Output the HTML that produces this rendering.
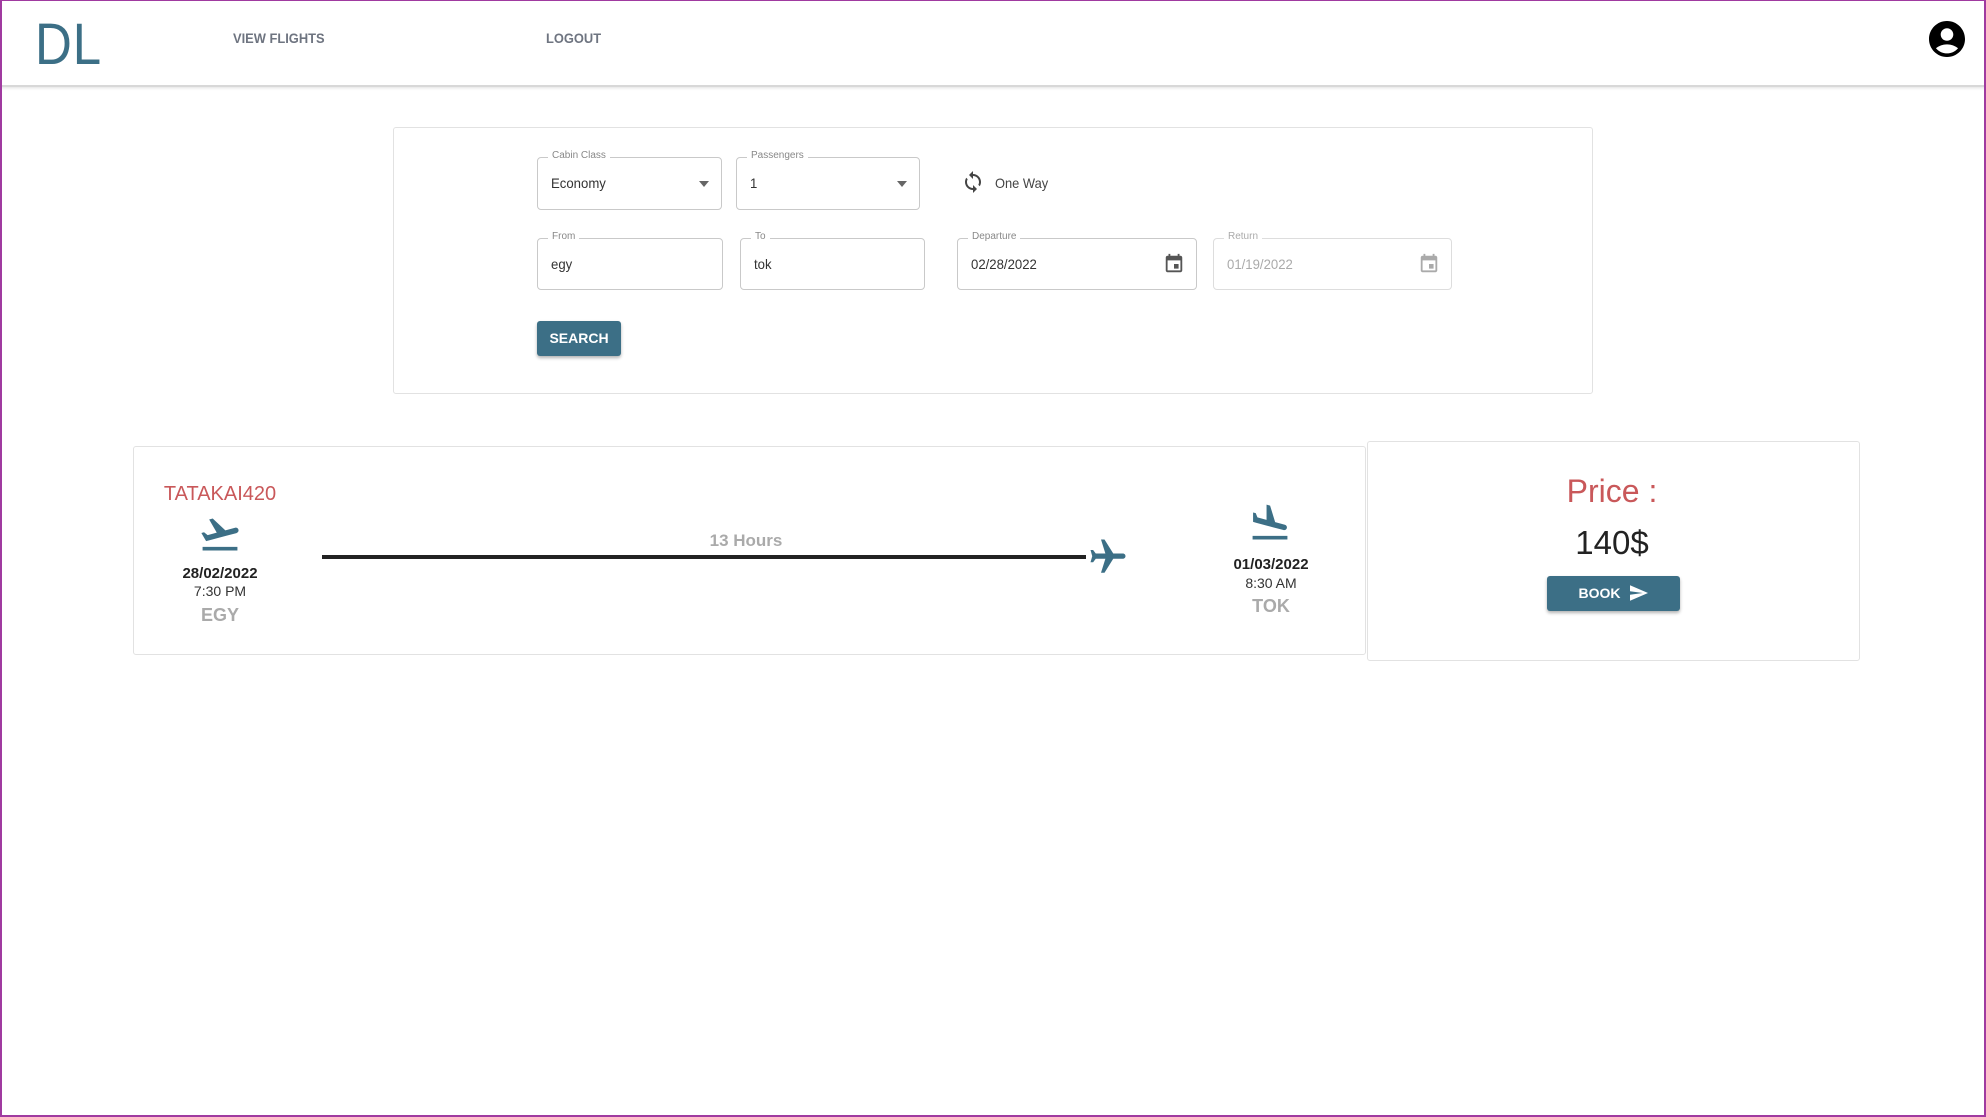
<!DOCTYPE html>
<html><head><meta charset="utf-8"><style>
*{box-sizing:border-box;margin:0;padding:0}
html,body{width:1986px;height:1117px;overflow:hidden;background:#fff;font-family:"Liberation Sans",Arial,sans-serif}
.frame{position:absolute;left:0;top:0;width:1986px;height:1117px;border:2px solid #a03aa0;border-top-width:1px}
.abs{position:absolute}
.hdr{position:absolute;left:0;top:0;width:1986px;height:87px;border-bottom:2px solid #d8d8d8;box-shadow:0 1px 3px rgba(0,0,0,.12)}
.nav{position:absolute;top:30px;font-size:14px;font-weight:bold;color:#6e7480;transform:scaleX(.92);transform-origin:left}
.card{position:absolute;border:1px solid #e2e2e2;border-radius:3px;background:#fff}
.fld{position:absolute;border:1px solid #c9c9c9;border-radius:4px;height:52px}
.fld .lb{position:absolute;top:-8px;left:10px;background:#fff;padding:0 4px;font-size:10px;color:#888}
.fld .v{position:absolute;left:13px;top:17px;font-size:14px;color:#333;transform:scaleX(.94);transform-origin:left}
.caret{position:absolute;right:12px;top:23px;width:0;height:0;border-left:5px solid transparent;border-right:5px solid transparent;border-top:6px solid #666}
.btn{position:absolute;background:#3c6f86;color:#fff;font-weight:bold;border-radius:3px;box-shadow:0 2px 3px rgba(0,0,0,.3);text-align:center}
.c{position:absolute;text-align:center;transform:translateX(-50%);white-space:nowrap}
</style></head><body>
<div class="hdr"></div>
<div class="abs" style="left:35px;top:11px;font-size:58px;color:#3c6f86;font-weight:normal;letter-spacing:1px;transform:scaleX(.88);transform-origin:left">DL</div>
<div class="nav" style="left:233px">VIEW FLIGHTS</div>
<div class="nav" style="left:546px">LOGOUT</div>
<svg class="abs" style="left:1929px;top:21px" width="36" height="36" viewBox="2 2 20 20"><path fill="#000" d="M12 2C6.480 2 2 6.480 2 12s4.480 10 10 10 10-4.480 10-10S17.520 2 12 2zm0 4c1.930 0 3.500 1.570 3.500 3.500S13.930 13 12 13s-3.500-1.570-3.500-3.500S10.070 6 12 6zm0 14c-2.030 0-4.430-.82-6.140-2.880C7.550 15.800 9.680 15 12 15s4.450.8 6.140 2.120C16.430 19.180 14.030 20 12 20z"/></svg>

<div class="card" style="left:393px;top:127px;width:1200px;height:267px"></div>
<div class="fld" style="left:537px;top:157px;width:185px;height:53px"><span class="lb">Cabin Class</span><span class="v">Economy</span><span class="caret"></span></div>
<div class="fld" style="left:736px;top:157px;width:184px;height:53px"><span class="lb">Passengers</span><span class="v">1</span><span class="caret"></span></div>
<svg class="abs" style="left:961px;top:170px" width="24" height="24" viewBox="0 0 24 24"><path fill="#444" d="M12 4V1L8 5l4 4V6c3.310 0 6 2.690 6 6 0 1.010-.25 1.970-.7 2.800l1.460 1.460C19.540 15.030 20 13.570 20 12c0-4.420-3.580-8-8-8zm0 14c-3.310 0-6-2.690-6-6 0-1.010.25-1.970.7-2.800L5.240 7.740C4.460 8.970 4 10.430 4 12c0 4.420 3.580 8 8 8v3l4-4-4-4v3z"/></svg>
<div class="abs" style="left:995px;top:175px;font-size:14px;color:#444;transform:scaleX(.92);transform-origin:left">One Way</div>

<div class="fld" style="left:537px;top:238px;width:186px"><span class="lb">From</span><span class="v">egy</span></div>
<div class="fld" style="left:740px;top:238px;width:185px"><span class="lb">To</span><span class="v">tok</span></div>
<div class="fld" style="left:957px;top:238px;width:240px"><span class="lb">Departure</span><span class="v">02/28/2022</span>
<svg class="abs" style="right:11px;top:14px" width="22" height="22" viewBox="0 0 24 24"><path fill="#555" d="M17 12h-5v5h5v-5zM16 1v2H8V1H6v2H5c-1.110 0-1.990.9-1.990 2L3 19c0 1.100.89 2 2 2h14c1.100 0 2-.9 2-2V5c0-1.100-.9-2-2-2h-1V1h-2zm3 18H5V8h14v11z"/></svg></div>
<div class="fld" style="left:1213px;top:238px;width:239px;border-color:#ddd"><span class="lb" style="color:#aaa">Return</span><span class="v" style="color:#aaa">01/19/2022</span>
<svg class="abs" style="right:11px;top:14px" width="22" height="22" viewBox="0 0 24 24"><path fill="#aaa" d="M17 12h-5v5h5v-5zM16 1v2H8V1H6v2H5c-1.110 0-1.990.9-1.990 2L3 19c0 1.100.89 2 2 2h14c1.100 0 2-.9 2-2V5c0-1.100-.9-2-2-2h-1V1h-2zm3 18H5V8h14v11z"/></svg></div>
<div class="btn" style="left:537px;top:321px;width:84px;height:35px;font-size:14px;line-height:35px">SEARCH</div>

<div class="card" style="left:133px;top:446px;width:1233px;height:209px"></div>
<div class="card" style="left:1367px;top:441px;width:493px;height:220px"></div>

<div class="c" style="left:220px;top:483px;font-size:20px;color:#c9585a">TATAKAI420</div>
<svg class="abs" style="left:198px;top:512px" width="44" height="44" viewBox="0 0 24 24"><path fill="#3c6f86" d="M2.500 19h19v2h-19zm19.570-9.360c-.21-.8-1.040-1.280-1.840-1.060L14.920 10l-6.900-6.430-1.930.51 4.140 7.170-4.970 1.330-1.970-1.540-1.450.39 1.820 3.160.77 1.330 1.600-.43 5.310-1.420 4.350-1.160L21 11.490c.81-.23 1.280-1.050 1.070-1.850z"/></svg>
<div class="c" style="left:220px;top:565px;font-size:15px;font-weight:bold;color:#222">28/02/2022</div>
<div class="c" style="left:220px;top:583px;font-size:14px;color:#333">7:30 PM</div>
<div class="c" style="left:220px;top:605px;font-size:18px;font-weight:bold;color:#aaa">EGY</div>

<div class="abs" style="left:322px;top:555px;width:764px;height:4px;background:#222"></div>
<div class="c" style="left:746px;top:531px;font-size:17px;font-weight:bold;color:#aaa">13 Hours</div>
<svg class="abs" style="left:1087px;top:536px" width="42" height="42" viewBox="0 0 24 24"><path fill="#3c6f86" transform="rotate(90 12 12)" d="M21 16v-2l-8-5V3.500c0-.83-.67-1.500-1.500-1.500S10 2.670 10 3.500V9l-8 5v2l8-2.500V19l-2 1.500V22l3.500-1 3.500 1v-1.500L13 19v-5.500l8 2.500z"/></svg>

<svg class="abs" style="left:1248px;top:501px" width="44" height="44" viewBox="0 0 24 24"><path fill="#3c6f86" d="M2.500 19h19v2h-19zm7.180-5.730l4.350 1.160 5.310 1.420c.8.21 1.620-.26 1.840-1.060.21-.8-.26-1.620-1.060-1.840l-5.310-1.420-2.760-9.020L10.120 2v8.280L5.150 8.950l-.93-2.320-1.450-.39v5.170l1.600.43 5.310 1.430z"/></svg>
<div class="c" style="left:1271px;top:556px;font-size:15px;font-weight:bold;color:#222">01/03/2022</div>
<div class="c" style="left:1271px;top:575px;font-size:14px;color:#333">8:30 AM</div>
<div class="c" style="left:1271px;top:596px;font-size:18px;font-weight:bold;color:#aaa">TOK</div>

<div class="c" style="left:1612px;top:473px;font-size:32px;color:#c9585a">Price :</div>
<div class="c" style="left:1612px;top:524px;font-size:33px;color:#222">140$</div>
<div class="btn" style="left:1547px;top:576px;width:133px;height:35px;font-size:14px;line-height:35px">BOOK <svg style="vertical-align:-4px;margin-left:6px" width="18" height="18" viewBox="2 3 21 18"><path fill="#fff" d="M2.010 21L23 12 2.010 3 2 10l15 2-15 2z"/></svg></div>

<div class="frame"></div>
</body></html>
